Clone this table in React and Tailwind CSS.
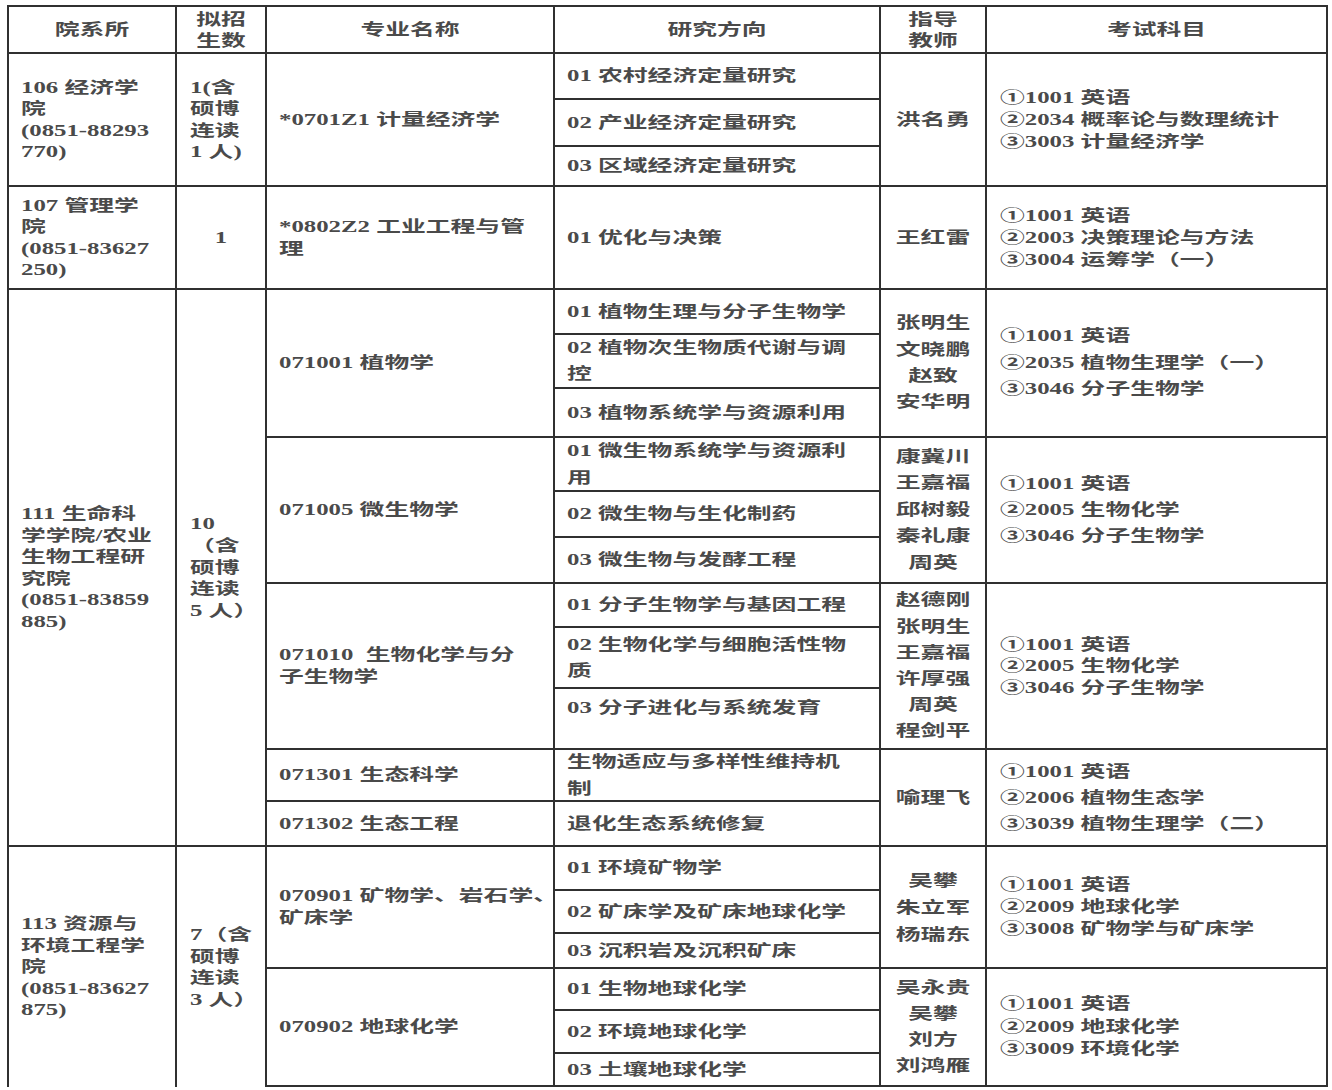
import React from "react";

function Cell({ pos, lines, align = "left", pl = "pl-[12px]", leading = "leading-[22px]", noBottom = false, top = false, pt = "" }) {
  const cls = [
    "flex border-r-2 border-[#303030]",
    noBottom ? "" : "border-b-2",
    top ? "items-start" : "items-center",
    align === "left" ? pl : "",
    pt,
    pos,
  ].join(" ");
  const inner = [
    "w-full whitespace-pre scale-x-[1.55]",
    align === "left" ? "origin-left text-left" : "origin-center text-center",
    leading,
  ].join(" ");
  return (
    <div className={cls}>
      <div className={inner}>
        {lines.map((l, i) => (
          <div key={i}>{l}</div>
        ))}
      </div>
    </div>
  );
}

export default function App() {
  return (
    <div className="w-[1332px] h-[1090px] bg-white overflow-hidden pt-[5px] pl-[7px] font-['Liberation_Serif','Noto_Sans_CJK_SC',serif] text-[16px] text-[#4a4a4a] font-bold">
      <div className="grid w-max grid-cols-[168px_90px_288px_326px_106px_341px] grid-rows-[47px_46px_47px_40px_103px_45px_54px_49px_54px_46px_46px_44px_61px_61px_52px_45px_44px_43px_35px_42px_43px_33px] border-t-2 border-l-2 border-[#303030]">
        {/* header */}
        <Cell pos="col-start-1 row-start-1" align="center" lines={["院系所"]} />
        <Cell pos="col-start-2 row-start-1" align="center" leading="leading-[21px]" lines={["拟招", "生数"]} />
        <Cell pos="col-start-3 row-start-1" align="center" lines={["专业名称"]} />
        <Cell pos="col-start-4 row-start-1" align="center" lines={["研究方向"]} />
        <Cell pos="col-start-5 row-start-1" align="center" leading="leading-[21px]" lines={["指导", "教师"]} />
        <Cell pos="col-start-6 row-start-1" align="center" lines={["考试科目"]} />

        {/* 106 */}
        <Cell pos="col-start-1 row-start-2 row-span-3" leading="leading-[21.5px]" lines={["106 经济学", "院", "(0851-88293", "770)"]} />
        <Cell pos="col-start-2 row-start-2 row-span-3" pl="pl-[13px]" leading="leading-[21.5px]" lines={["1(含", "硕博", "连读", "1 人)"]} />
        <Cell pos="col-start-3 row-start-2 row-span-3" lines={["*0701Z1 计量经济学"]} />
        <Cell pos="col-start-4 row-start-2" lines={["01 农村经济定量研究"]} />
        <Cell pos="col-start-4 row-start-3" lines={["02 产业经济定量研究"]} />
        <Cell pos="col-start-4 row-start-4" lines={["03 区域经济定量研究"]} />
        <Cell pos="col-start-5 row-start-2 row-span-3" align="center" lines={["洪名勇"]} />
        <Cell pos="col-start-6 row-start-2 row-span-3" pl="pl-[13px]" lines={["①1001 英语", "②2034 概率论与数理统计", "③3003 计量经济学"]} />

        {/* 107 */}
        <Cell pos="col-start-1 row-start-5" leading="leading-[21.5px]" lines={["107 管理学", "院", "(0851-83627", "250)"]} />
        <Cell pos="col-start-2 row-start-5" align="center" lines={["1"]} />
        <Cell pos="col-start-3 row-start-5" lines={["*0802Z2 工业工程与管", "理"]} />
        <Cell pos="col-start-4 row-start-5" lines={["01 优化与决策"]} />
        <Cell pos="col-start-5 row-start-5" align="center" lines={["王红雷"]} />
        <Cell pos="col-start-6 row-start-5" pl="pl-[13px]" lines={["①1001 英语", "②2003 决策理论与方法", "③3004 运筹学（一）"]} />

        {/* 111 */}
        <Cell pos="col-start-1 row-start-6 row-span-11" leading="leading-[21.5px]" lines={["111 生命科", "学学院/农业", "生物工程研", "究院", "(0851-83859", "885)"]} />
        <Cell pos="col-start-2 row-start-6 row-span-11" pl="pl-[13px]" leading="leading-[21.8px]" lines={["10", "（含", "硕博", "连读", "5 人）"]} />

        <Cell pos="col-start-3 row-start-6 row-span-3" lines={["071001 植物学"]} />
        <Cell pos="col-start-4 row-start-6" lines={["01 植物生理与分子生物学"]} />
        <Cell pos="col-start-4 row-start-7" leading="leading-[26px]" lines={["02 植物次生物质代谢与调", "控"]} />
        <Cell pos="col-start-4 row-start-8" lines={["03 植物系统学与资源利用"]} />
        <Cell pos="col-start-5 row-start-6 row-span-3" align="center" leading="leading-[26.3px]" lines={["张明生", "文晓鹏", "赵致", "安华明"]} />
        <Cell pos="col-start-6 row-start-6 row-span-3" pl="pl-[13px]" leading="leading-[26.5px]" lines={["①1001 英语", "②2035 植物生理学（一）", "③3046 分子生物学"]} />

        <Cell pos="col-start-3 row-start-9 row-span-3" lines={["071005 微生物学"]} />
        <Cell pos="col-start-4 row-start-9" leading="leading-[27px]" lines={["01 微生物系统学与资源利", "用"]} />
        <Cell pos="col-start-4 row-start-10" lines={["02 微生物与生化制药"]} />
        <Cell pos="col-start-4 row-start-11" lines={["03 微生物与发酵工程"]} />
        <Cell pos="col-start-5 row-start-9 row-span-3" align="center" leading="leading-[26.5px]" lines={["康冀川", "王嘉福", "邱树毅", "秦礼康", "周英"]} />
        <Cell pos="col-start-6 row-start-9 row-span-3" pl="pl-[13px]" leading="leading-[26px]" lines={["①1001 英语", "②2005 生物化学", "③3046 分子生物学"]} />

        <Cell pos="col-start-3 row-start-12 row-span-3" lines={["071010  生物化学与分", "子生物学"]} />
        <Cell pos="col-start-4 row-start-12" lines={["01 分子生物学与基因工程"]} />
        <Cell pos="col-start-4 row-start-13" leading="leading-[26px]" lines={["02 生物化学与细胞活性物", "质"]} />
        <Cell pos="col-start-4 row-start-14" top pt="pt-[6px]" leading="leading-[26px]" lines={["03 分子进化与系统发育"]} />
        <Cell pos="col-start-5 row-start-12 row-span-3" align="center" leading="leading-[26.2px]" lines={["赵德刚", "张明生", "王嘉福", "许厚强", "周英", "程剑平"]} />
        <Cell pos="col-start-6 row-start-12 row-span-3" pl="pl-[13px]" leading="leading-[21.5px]" lines={["①1001 英语", "②2005 生物化学", "③3046 分子生物学"]} />

        <Cell pos="col-start-3 row-start-15" lines={["071301 生态科学"]} />
        <Cell pos="col-start-4 row-start-15" leading="leading-[27px]" lines={["生物适应与多样性维持机", "制"]} />
        <Cell pos="col-start-3 row-start-16" lines={["071302 生态工程"]} />
        <Cell pos="col-start-4 row-start-16" lines={["退化生态系统修复"]} />
        <Cell pos="col-start-5 row-start-15 row-span-2" align="center" lines={["喻理飞"]} />
        <Cell pos="col-start-6 row-start-15 row-span-2" pl="pl-[13px]" leading="leading-[26px]" lines={["①1001 英语", "②2006 植物生态学", "③3039 植物生理学（二）"]} />

        {/* 113 */}
        <Cell pos="col-start-1 row-start-17 row-span-6" noBottom leading="leading-[21.5px]" lines={["113 资源与", "环境工程学", "院", "(0851-83627", "875)"]} />
        <Cell pos="col-start-2 row-start-17 row-span-6" noBottom pl="pl-[13px]" leading="leading-[21.5px]" lines={["7（含", "硕博", "连读", "3 人）"]} />

        <Cell pos="col-start-3 row-start-17 row-span-3" lines={["070901 矿物学、岩石学、", "矿床学"]} />
        <Cell pos="col-start-4 row-start-17" lines={["01 环境矿物学"]} />
        <Cell pos="col-start-4 row-start-18" lines={["02 矿床学及矿床地球化学"]} />
        <Cell pos="col-start-4 row-start-19" lines={["03 沉积岩及沉积矿床"]} />
        <Cell pos="col-start-5 row-start-17 row-span-3" align="center" leading="leading-[27px]" lines={["吴攀", "朱立军", "杨瑞东"]} />
        <Cell pos="col-start-6 row-start-17 row-span-3" pl="pl-[13px]" lines={["①1001 英语", "②2009 地球化学", "③3008 矿物学与矿床学"]} />

        <Cell pos="col-start-3 row-start-20 row-span-3" lines={["070902 地球化学"]} />
        <Cell pos="col-start-4 row-start-20" lines={["01 生物地球化学"]} />
        <Cell pos="col-start-4 row-start-21" lines={["02 环境地球化学"]} />
        <Cell pos="col-start-4 row-start-22" lines={["03 土壤地球化学"]} />
        <Cell pos="col-start-5 row-start-20 row-span-3" align="center" leading="leading-[26px]" lines={["吴永贵", "吴攀", "刘方", "刘鸿雁"]} />
        <Cell pos="col-start-6 row-start-20 row-span-3" pl="pl-[13px]" leading="leading-[22.5px]" lines={["①1001 英语", "②2009 地球化学", "③3009 环境化学"]} />
      </div>
    </div>
  );
}
